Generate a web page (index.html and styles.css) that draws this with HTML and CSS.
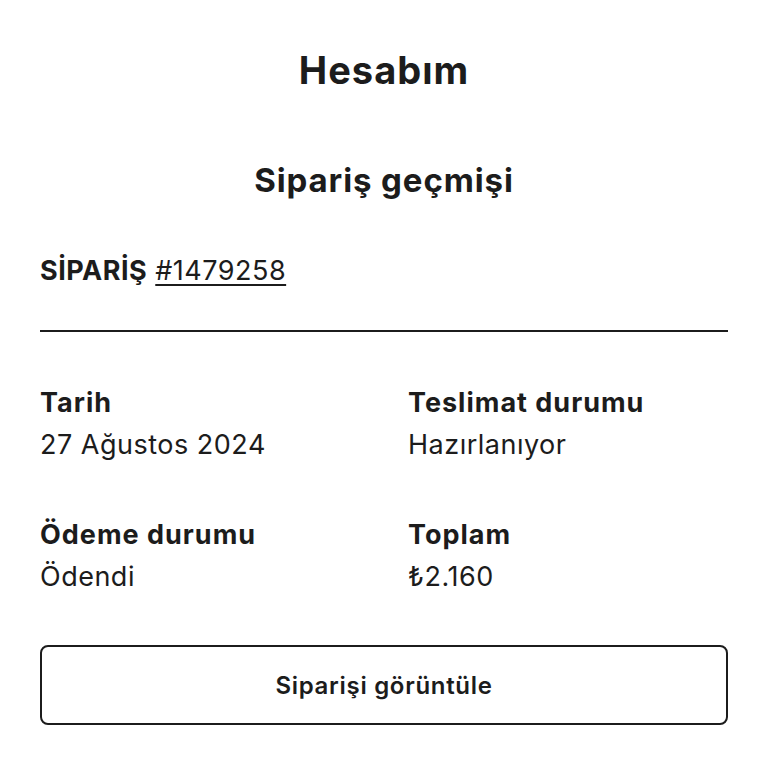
FILE: index.html
```html
<!DOCTYPE html>
<html lang="tr">
<head>
    <meta charset="UTF-8">
    <meta name="viewport" content="width=device-width, initial-scale=1.0">
    <title>Hesabım - Sipariş geçmişi</title>
    <link rel="stylesheet" href="styles.css">
</head>
<body>
    <div id="account">
        <h1 class="page-title">Hesabım</h1>
        <h2 class="section-title">Sipariş geçmişi</h2>

        <!-- Single order card -->
        <div class="order">
            <div class="order-head">
                <span class="order-label">SİPARİŞ</span>
                <a href="#" class="order-number">#1479258</a>
            </div>

            <div class="order-details">
                <div class="detail">
                    <div class="detail-label">Tarih</div>
                    <div class="detail-value">27 Ağustos 2024</div>
                </div>
                <div class="detail">
                    <div class="detail-label">Teslimat durumu</div>
                    <div class="detail-value">Hazırlanıyor</div>
                </div>
                <div class="detail">
                    <div class="detail-label">Ödeme durumu</div>
                    <div class="detail-value">Ödendi</div>
                </div>
                <div class="detail">
                    <div class="detail-label">Toplam</div>
                    <div class="detail-value">₺2.160</div>
                </div>
            </div>

            <a href="#" class="order-button">Siparişi görüntüle</a>
        </div>
    </div>
</body>
</html>
```

FILE: styles.css
```css
* {
    box-sizing: border-box;
    margin: 0;
    padding: 0;
}

body {
    font-family: "Inter", "Noto Sans", sans-serif;
    background-color: #ffffff;
    color: #1c1c1c;
}

#account {
    padding: 46px 40px 40px;
}

.page-title {
    font-size: 38px;
    font-weight: 700;
    line-height: 48px;
    text-align: center;
    letter-spacing: 1px;
}

.section-title {
    font-size: 33px;
    font-weight: 700;
    line-height: 42px;
    text-align: center;
    margin-top: 65px;
    letter-spacing: 0.9px;
}

/* Order card */
.order-head {
    margin-top: 52px;
    font-size: 27px;
    line-height: 36px;
    padding-bottom: 41px;
    border-bottom: 2px solid #1c1c1c;
    letter-spacing: 0.5px;
}

.order-label {
    font-weight: 700;
}

.order-number {
    color: #1c1c1c;
    text-decoration: underline;
    text-decoration-thickness: 2px;
    text-underline-offset: 4px;
}

.order-details {
    display: grid;
    grid-template-columns: 1fr 1fr;
    column-gap: 48px;
    row-gap: 48px;
    margin-top: 50px;
}

.detail-label {
    font-size: 27px;
    font-weight: 700;
    line-height: 42px;
    letter-spacing: 1px;
}

.detail-value {
    font-size: 27px;
    line-height: 42px;
    letter-spacing: 0.5px;
}

.order-button {
    display: flex;
    align-items: center;
    justify-content: center;
    height: 80px;
    margin-top: 47px;
    border: 2px solid #1c1c1c;
    border-radius: 8px;
    color: #1c1c1c;
    font-size: 24px;
    font-weight: 600;
    letter-spacing: 0.7px;
    text-decoration: none;
}
```
